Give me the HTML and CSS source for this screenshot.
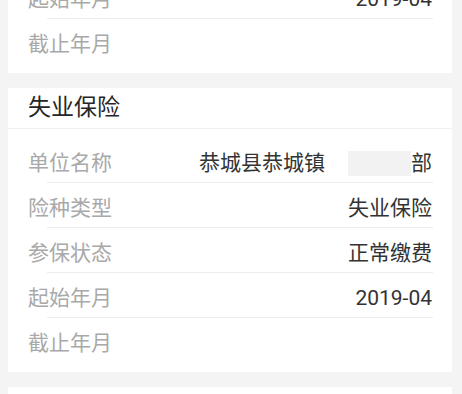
FILE: index.html
```html
<!DOCTYPE html>
<html lang="zh-CN">
<head>
<meta charset="utf-8">
<title>参保信息</title>
<link rel="stylesheet" href="styles.css">
</head>
<body>
<div class="page">
  <section class="card card-first">
    <div class="card-title">养老保险</div>
    <div class="list">
      <div class="row"><span class="label">单位名称</span><span class="value">恭城县恭城镇</span></div>
      <div class="row"><span class="label">险种类型</span><span class="value">养老保险</span></div>
      <div class="row"><span class="label">参保状态</span><span class="value">正常缴费</span></div>
      <div class="row"><span class="label">起始年月</span><span class="value">2019-04</span></div>
      <div class="row"><span class="label">截止年月</span><span class="value"></span></div>
    </div>
  </section>

  <section class="card">
    <div class="card-title">失业保险</div>
    <div class="list">
      <div class="row"><span class="label">单位名称</span><span class="value">恭城县恭城镇<span class="mask"></span>部</span></div>
      <div class="row"><span class="label">险种类型</span><span class="value">失业保险</span></div>
      <div class="row"><span class="label">参保状态</span><span class="value">正常缴费</span></div>
      <div class="row"><span class="label">起始年月</span><span class="value">2019-04</span></div>
      <div class="row"><span class="label">截止年月</span><span class="value"></span></div>
    </div>
  </section>

  <section class="card">
    <div class="card-title">工伤保险</div>
  </section>
</div>
</body>
</html>
```

FILE: styles.css
```css
html, body {
  margin: 0;
  padding: 0;
  background: #f4f4f4;
}

body {
  font-family: Roboto, "Noto Sans CJK SC", sans-serif;
  overflow: hidden;
}

.page {
  display: flex;
  flex-direction: column;
  gap: 15px;
  padding: 0 10px 0 8px;
}

.card {
  background: #ffffff;
}

.card-first {
  margin-top: -211px;
}

.card-title {
  height: 40px;
  line-height: 40px;
  padding: 0 20px;
  font-size: 23px;
  color: #262626;
  border-bottom: 1px solid #f0f0f0;
}

.list {
  padding: 9px 0 10px;
}

.row {
  display: flex;
  justify-content: space-between;
  align-items: center;
  box-sizing: content-box;
  height: 38px;
  padding: 6px 20px 0;
  font-size: 21px;
  line-height: 24px;
}

.row + .row {
  border-top: 1px solid #ececec;
  border-image: linear-gradient(to right, transparent 40px, #ececec 40px, #ececec calc(100% - 20px), transparent calc(100% - 20px)) 1;
}

.label {
  color: #a9a9a9;
}

.value {
  color: #333333;
  display: flex;
  align-items: center;
}

.mask {
  display: inline-block;
  width: 63px;
  height: 25px;
  margin-left: 23px;
  background: #f2f2f2;
}
```
